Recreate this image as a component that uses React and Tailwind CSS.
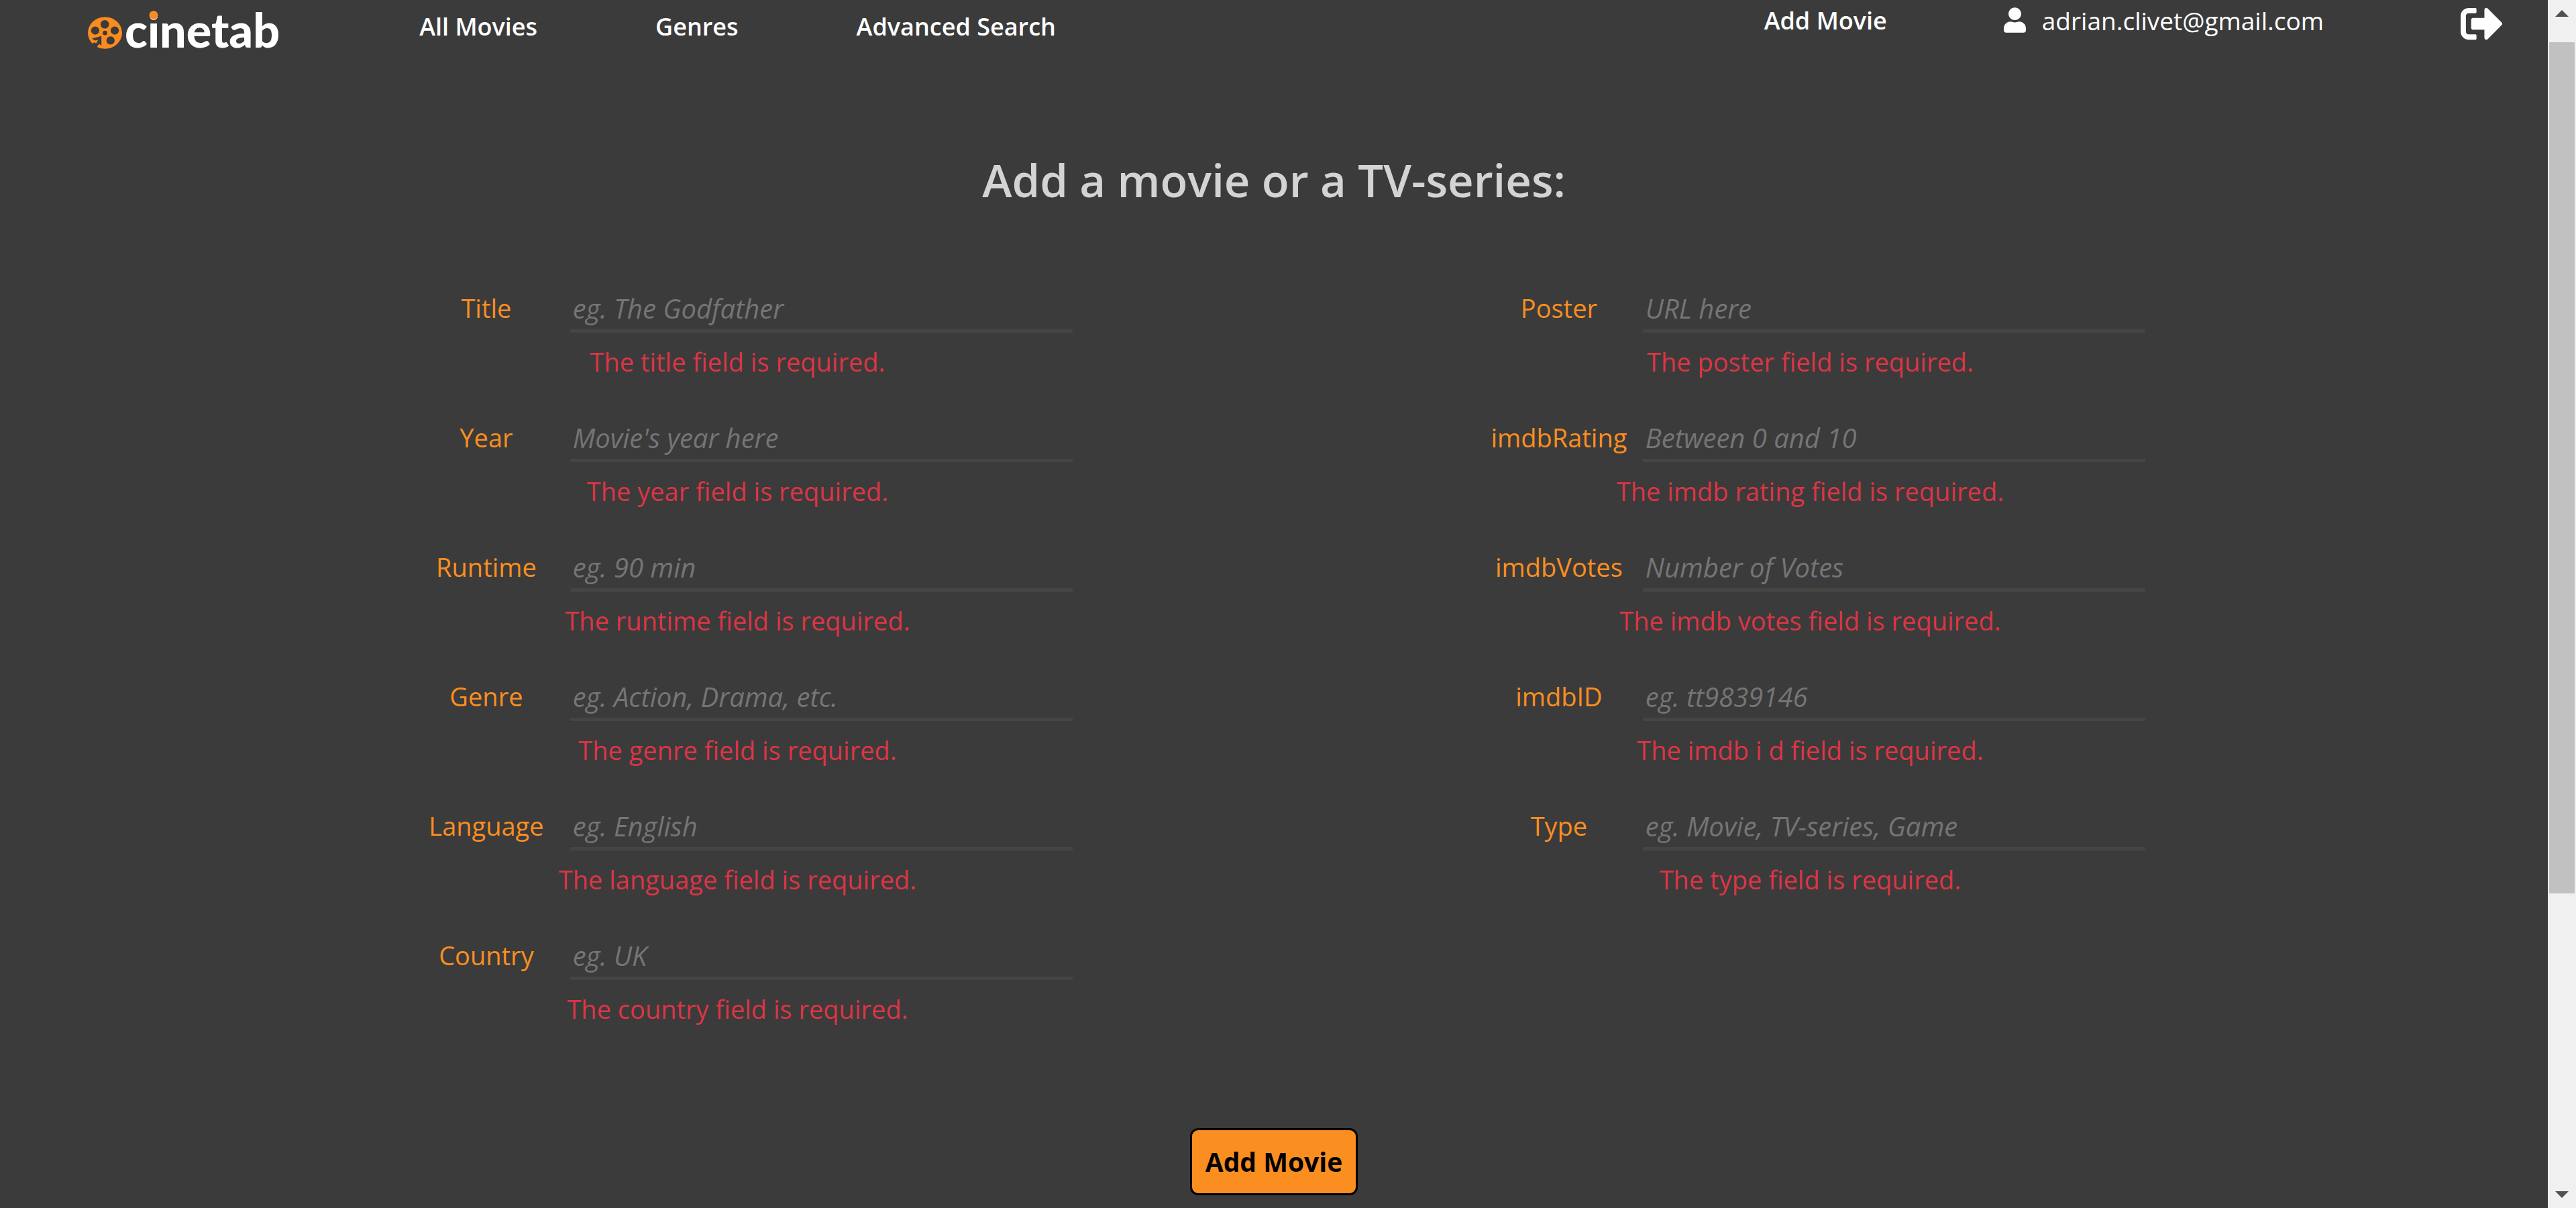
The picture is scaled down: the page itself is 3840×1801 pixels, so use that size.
import { FaSignOutAlt, FaUser } from "react-icons/fa";

const leftFields = [
  { id: "title", label: "Title", placeholder: "eg. The Godfather", error: "The title field is required." },
  { id: "year", label: "Year", placeholder: "Movie's year here", error: "The year field is required." },
  { id: "runtime", label: "Runtime", placeholder: "eg. 90 min", error: "The runtime field is required." },
  { id: "genre", label: "Genre", placeholder: "eg. Action, Drama, etc.", error: "The genre field is required." },
  { id: "language", label: "Language", placeholder: "eg. English", error: "The language field is required." },
  { id: "country", label: "Country", placeholder: "eg. UK", error: "The country field is required." },
];

const rightFields = [
  { id: "poster", label: "Poster", placeholder: "URL here", error: "The poster field is required." },
  { id: "imdbRating", label: "imdbRating", placeholder: "Between 0 and 10", error: "The imdb rating field is required." },
  { id: "imdbVotes", label: "imdbVotes", placeholder: "Number of Votes", error: "The imdb votes field is required." },
  { id: "imdbID", label: "imdbID", placeholder: "eg. tt9839146", error: "The imdb i d field is required." },
  { id: "type", label: "Type", placeholder: "eg. Movie, TV-series, Game", error: "The type field is required." },
];

function Logo() {
  return (
    <a href="#" className="flex items-start text-white">
      <svg viewBox="0 0 154 143" className="mt-[25px] h-12 w-[51px]" aria-hidden="true">
        <ellipse cx="77" cy="71.5" rx="77" ry="71.5" fill="#f98b1f" />
        <g fill="#3b3b3b">
          <circle cx="76" cy="33" r="19" />
          <circle cx="33" cy="61" r="18.5" />
          <circle cx="121" cy="61" r="18.5" />
          <circle cx="102" cy="106" r="18.5" />
          <circle cx="77" cy="72" r="10" />
          <path d="M18 97 61 86V128L50 121 38 140 20 122 34 108Z" />
        </g>
        <path d="M24 108 46 103 38 118 26 114Z" fill="#f98b1f" />
      </svg>
      <span className="ml-1 font-['Lato',sans-serif] text-[70px] leading-[88px] font-black">
        c
        <span className="relative">
          i
          <span className="absolute top-[14px] left-1/2 size-[13px] -translate-x-1/2 rounded-full bg-[#f98b1f]" />
        </span>
        netab
      </span>
    </a>
  );
}

function Header() {
  return (
    <header className="flex h-[92px] items-start justify-between pr-[67px] pl-[131px] text-[36px] leading-12 text-white">
      <div className="flex items-start">
        <Logo />
        <nav className="mt-4 ml-[208px] flex gap-[176px] font-semibold">
          <a href="#">All Movies</a>
          <a href="#">Genres</a>
          <a href="#">Advanced Search</a>
        </nav>
      </div>
      <div className="mt-1 flex items-start">
        <a href="#" className="mt-[3px] font-semibold">Add Movie</a>
        <a href="#" className="mt-[3px] ml-[174px] flex items-start gap-6 text-[37px]">
          <FaUser className="mt-1 h-[38px] w-[33px]" />
          <span>adrian.clivet@gmail.com</span>
        </a>
        <button type="button" aria-label="Log out" className="ml-[204px]">
          <FaSignOutAlt className="size-[63px]" />
        </button>
      </div>
    </header>
  );
}

function Field({ id, label, placeholder, error }) {
  return (
    <div>
      <div className="grid grid-cols-[1fr_3fr]">
        <label htmlFor={id} className="text-center text-[38px] leading-12 text-[#fb8e20]">
          {label}
        </label>
        <input
          id={id}
          type="text"
          placeholder={placeholder}
          aria-describedby={id + "-error"}
          className="h-[61px] w-full min-w-0 border-b-[5px] border-[#474542] bg-transparent px-1 pb-2 text-[40px] text-white outline-none placeholder:text-[#757575] placeholder:italic"
        />
      </div>
      <p id={id + "-error"} className="mt-[19px] text-center text-[38px] leading-12 text-[#dc3545]">
        {error}
      </p>
    </div>
  );
}

function FieldColumn({ fields }) {
  return (
    <div className="flex flex-col gap-[65px]">
      {fields.map((f) => (
        <Field key={f.id} {...f} />
      ))}
    </div>
  );
}

function ScrollTrack() {
  return (
    <div aria-hidden="true" className="flex w-[42px] shrink-0 flex-col items-center bg-[#f0f0f0]">
      <div className="flex h-[63px] items-start pt-[15px]">
        <svg viewBox="0 0 20 10" className="h-[10px] w-5 fill-[#505050]">
          <path d="M0 10 10 0 20 10Z" />
        </svg>
      </div>
      <div className="w-[38px] flex-[1269] bg-[#c1c1c1]" />
      <div className="flex-[429]" />
      <div className="flex h-10 items-start pt-[15px]">
        <svg viewBox="0 0 20 10" className="h-[10px] w-5 fill-[#505050]">
          <path d="M0 0 10 10 20 0Z" />
        </svg>
      </div>
    </div>
  );
}

export default function App() {
  return (
    <div className="flex min-h-screen bg-[#3b3b3b] font-['Open_Sans','Noto_Sans',sans-serif]">
      <div className="min-w-0 flex-1">
        <Header />
        <main className="px-[15.8%] pt-[136px]">
          <h1 className="text-center text-[67px] leading-20 font-semibold text-[#d3d3d3]">
            Add a movie or a TV-series:
          </h1>
          <form>
            <div className="mt-[127px] grid grid-cols-2 gap-x-[23.1%]">
              <FieldColumn fields={leftFields} />
              <FieldColumn fields={rightFields} />
            </div>
            <div className="mt-[154px] flex justify-center">
              <button
                type="button"
                className="h-[100px] rounded-xl border-[3px] border-black bg-[#fa8e20] px-5 text-[39px] font-bold text-black"
              >
                Add Movie
              </button>
            </div>
          </form>
        </main>
      </div>
      <ScrollTrack />
    </div>
  );
}
